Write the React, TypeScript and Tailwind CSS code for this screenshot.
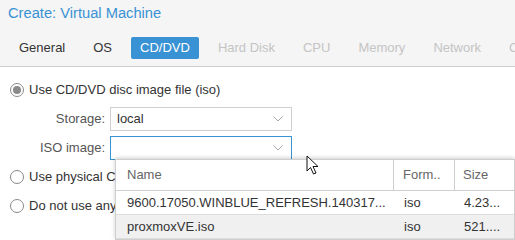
import React from 'react';

const tabs = [
  { name: 'General', state: 'normal' },
  { name: 'OS', state: 'normal' },
  { name: 'CD/DVD', state: 'active' },
  { name: 'Hard Disk', state: 'disabled' },
  { name: 'CPU', state: 'disabled' },
  { name: 'Memory', state: 'disabled' },
  { name: 'Network', state: 'disabled' },
  { name: 'Confirm', state: 'disabled' },
];

const isoFiles = [
  { name: '9600.17050.WINBLUE_REFRESH.140317...', format: 'iso', size: '4.23...' },
  { name: 'proxmoxVE.iso', format: 'iso', size: '521....' },
];

const Radio = ({ checked, label }: { checked?: boolean; label: string }) => (
  <div className="flex items-center h-[14px]">
    <span className="w-[14px] h-[14px] rounded-full border border-[#8a8a8a] bg-white flex items-center justify-center shrink-0">
      {checked && <span className="w-[8px] h-[8px] rounded-full bg-[#8a8a8a]" />}
    </span>
    <span className="ml-[5px] text-[13px] text-[#333] whitespace-nowrap">{label}</span>
  </div>
);

const Chevron = () => (
  <svg width="10" height="6" viewBox="0 0 10 6" className="mr-[8px]">
    <path d="M0.5 0.5L5 5L9.5 0.5" fill="none" stroke="#aaa" strokeWidth="1" />
  </svg>
);

const App = () => {
  return (
    <div className="relative w-[515px] h-[240px] overflow-hidden bg-white font-['Liberation_Sans',Arial,sans-serif]">
      {/* Header */}
      <div className="h-[67px] bg-[#f5f5f5] border-b border-[#cfcfcf]">
        <div className="pl-[8px] pt-[4px] text-[14.7px] leading-[18px] text-[#3892d4]">Create: Virtual Machine</div>
        <div className="flex gap-[10px] pl-[10px] mt-[15px] whitespace-nowrap">
          {tabs.map((tab) => (
            <div
              key={tab.name}
              className={`h-[22px] px-[9px] flex items-center text-[13px] rounded-[2px] ${
                tab.state === 'active'
                  ? 'bg-[#3892d4] text-white'
                  : tab.state === 'disabled'
                  ? 'text-[#c4c4c4]'
                  : 'text-[#333]'
              }`}
            >
              {tab.name}
            </div>
          ))}
        </div>
      </div>

      {/* Form */}
      <div className="pl-[10px] pt-[16px]">
        <Radio checked label="Use CD/DVD disc image file (iso)" />
        <div className="flex items-center mt-[10px]">
          <label className="w-[100px] pr-[5px] text-right text-[13px] text-[#555]">Storage:</label>
          <div className="w-[182px] h-[24px] border border-[#cfcfcf] flex items-center justify-between">
            <span className="pl-[6px] text-[13px] text-[#333]">local</span>
            <Chevron />
          </div>
        </div>
        <div className="flex items-center mt-[5px]">
          <label className="w-[100px] pr-[5px] text-right text-[13px] text-[#555]">ISO image:</label>
          <div className="w-[182px] h-[24px] border border-[#3892d4] flex items-center justify-end">
            <Chevron />
          </div>
        </div>
        <div className="mt-[10px]">
          <Radio label="Use physical CD/DVD Drive" />
        </div>
        <div className="mt-[15px]">
          <Radio label="Do not use any media" />
        </div>
      </div>

      {/* ISO picker dropdown */}
      <div className="absolute left-[115px] top-[159px] w-[400px] bg-white border border-[#cfcfcf] shadow-[0_-1px_4px_rgba(0,0,0,0.2)]">
        <div className="flex h-[31px] border-b border-[#cfcfcf] text-[13px] text-[#666]">
          <div className="w-[278px] pl-[11px] flex items-center border-r border-[#cfcfcf]">Name</div>
          <div className="w-[61px] pl-[9px] flex items-center border-r border-[#cfcfcf]">Form..</div>
          <div className="flex-1 pl-[8px] flex items-center">Size</div>
        </div>
        {isoFiles.map((f, i) => (
          <div
            key={f.name}
            className={`flex h-[24px] items-center text-[13px] text-[#333] border-b border-[#dcdcdc] ${
              i === 1 ? 'bg-[#f0f0f0]' : ''
            }`}
          >
            <div className="w-[278px] pl-[11px] whitespace-nowrap overflow-hidden">{f.name}</div>
            <div className="w-[61px] pl-[10px]">{f.format}</div>
            <div className="flex-1 pl-[9px]">{f.size}</div>
          </div>
        ))}
      </div>

      {/* Mouse pointer */}
      <svg className="absolute left-[306px] top-[155px]" width="14" height="21" viewBox="0 0 14 21">
        <path d="M1 1L1 16L4.5 12.5L7.5 19L10 18L7 11.5L12 11.5Z" fill="#fff" stroke="#111" strokeWidth="1" strokeLinejoin="round" />
      </svg>
    </div>
  );
};

export default App;
